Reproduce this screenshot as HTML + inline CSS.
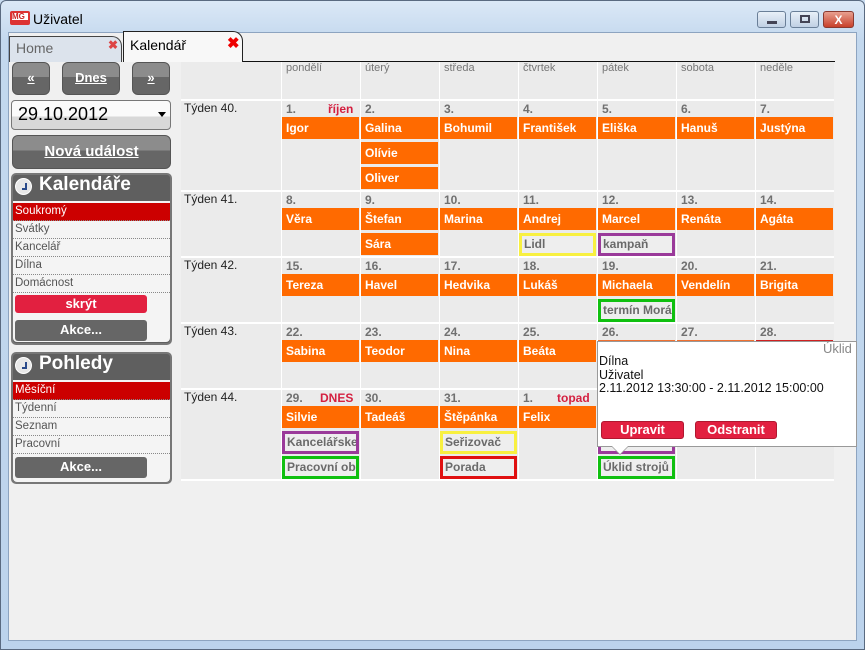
<!DOCTYPE html>
<html><head><meta charset="utf-8"><style>
*{margin:0;padding:0;box-sizing:border-box}
body{width:865px;height:650px;position:relative;overflow:hidden;background:#c9dcf0;font-family:"Liberation Sans",sans-serif;font-size:12px}
.a{position:absolute}
.win{left:0;top:0;width:865px;height:650px;border:1px solid #5a6a80;border-radius:6px 6px 0 0;background:linear-gradient(#dbe8f6,#c3d8ee 40px,#bcd3ec)}
.inner{left:8px;top:32px;width:849px;height:609px;background:#f0f0f0;border:1px solid #8da4c0}
.btn{background:linear-gradient(#8c8c8c 0,#8c8c8c 45%,#666 45%,#666);color:#fff;font-weight:bold;text-align:center;border-radius:6px;border:1px solid #555}
.cell{background:#ebebeb}
.dn{color:#707070;font-weight:bold;font-size:12px}
.ev{background:#ff6a00;color:#fff;font-weight:bold;font-size:12px;height:22px;line-height:22px;padding-left:4px;width:77px;white-space:nowrap;overflow:hidden}
.ob{background:#eee;color:#6a6a6a;font-weight:bold;font-size:12px;height:23px;line-height:17px;padding-left:2px;width:77px;border:3px solid;white-space:nowrap;overflow:hidden}
.hd{color:#777;font-size:11px}
.wk{font-size:12px;color:#222}
.it{left:13px;width:157px;height:18px;line-height:17px;font-size:11.5px;color:#555;border-bottom:1px dotted #888;padding-left:2px;background:#f4f4f4}
.panel{background:#5f5f5f;border-radius:5px;border:2px solid #777}
.clk{width:17px;height:17px;border-radius:50%;background:#e8e8e8;border:1px solid #fff}
.clk:after{content:"";position:absolute;left:6px;top:4px;width:3px;height:5px;border-right:2px solid #2a4a8a;border-bottom:2px solid #2a4a8a}
</style></head><body>
<div class="a win"></div>
<div class="a" style="left:10px;top:11px;width:20px;height:14px;background:#d33;border-radius:2px"></div>
<div class="a" style="left:12px;top:13px;width:16px;height:7px;background:#fff"></div>
<div class="a" style="left:12px;top:13px;font-size:8px;color:#c22;font-weight:bold;line-height:8px">MG</div>
<div class="a" style="left:33px;top:11px;font-size:14px;color:#000">Uživatel</div>
<div class="a" style="left:757px;top:11px;width:29px;height:17px;border:1px solid #6a7f98;border-radius:3px;background:linear-gradient(#e8f0f8,#c0d0e4)"><div class="a" style="left:9px;top:9px;width:10px;height:3px;background:#445"></div></div>
<div class="a" style="left:790px;top:11px;width:29px;height:17px;border:1px solid #6a7f98;border-radius:3px;background:linear-gradient(#e8f0f8,#c0d0e4)"><div class="a" style="left:9px;top:3px;width:10px;height:8px;border:2px solid #445"></div></div>
<div class="a" style="left:823px;top:11px;width:31px;height:17px;border:1px solid #8a3a30;border-radius:3px;background:linear-gradient(#e8a090,#c8402a);color:#fff;font-weight:bold;text-align:center;line-height:16px;font-size:12px">X</div>
<div class="a inner"></div>
<div class="a" style="left:9px;top:36px;width:113px;height:26px;background:#dce3ec;border:1px solid #444;border-bottom:none;border-radius:0 10px 0 0"></div>
<div class="a" style="left:16px;top:40px;font-size:14px;color:#666">Home</div>
<div class="a" style="left:108px;top:38px;font-size:12px;color:#d44;font-weight:bold">✖</div>
<div class="a" style="left:123px;top:31px;width:120px;height:31px;background:#f8f8f8;border:1px solid #222;border-bottom:none;border-radius:0 10px 0 0"></div>
<div class="a" style="left:130px;top:37px;font-size:14px;color:#000">Kalendář</div>
<div class="a" style="left:227px;top:34px;font-size:15px;color:#e00;font-weight:bold">✖</div>
<div class="a" style="left:243px;top:61px;width:592px;height:1px;background:#111"></div>

<!-- sidebar -->
<div class="a btn" style="left:12px;top:62px;width:38px;height:33px;line-height:30px;font-size:13px;text-decoration:underline">«</div>
<div class="a btn" style="left:62px;top:62px;width:58px;height:33px;line-height:30px;font-size:13px;text-decoration:underline">Dnes</div>
<div class="a btn" style="left:132px;top:62px;width:38px;height:33px;line-height:30px;font-size:13px;text-decoration:underline">»</div>
<div class="a" style="left:11px;top:100px;width:160px;height:30px;border:1px solid #777;border-radius:4px;background:linear-gradient(#fafafa,#fafafa 55%,#d8d8d8 55%,#d8d8d8);font-size:18px;line-height:26px;padding-left:6px">29.10.2012</div>
<div class="a" style="left:158px;top:112px;border:4px solid transparent;border-top:5px solid #000"></div>
<div class="a btn" style="left:12px;top:135px;width:159px;height:34px;line-height:31px;font-size:15px;text-decoration:underline">Nová událost</div>

<div class="a panel" style="left:11px;top:173px;width:161px;height:172px"></div>
<div class="a clk" style="left:15px;top:178px"></div>
<div class="a" style="left:39px;top:174px;font-size:19px;color:#fff;font-weight:bold">Kalendáře</div>
<div class="a" style="left:13px;top:201px;width:157px;height:141px;background:#f4f4f4;border-radius:0 0 4px 4px"></div>
<div class="a it" style="top:203px;background:#cc0000;color:#fff">Soukromý</div>
<div class="a it" style="top:221px">Svátky</div>
<div class="a it" style="top:239px">Kancelář</div>
<div class="a it" style="top:257px">Dílna</div>
<div class="a it" style="top:275px">Domácnost</div>
<div class="a" style="left:15px;top:295px;width:132px;height:18px;background:#e22040;border-radius:3px;color:#fff;font-weight:bold;text-align:center;line-height:17px;font-size:13px">skrýt</div>
<div class="a" style="left:15px;top:320px;width:132px;height:21px;background:#666;border-radius:3px;color:#fff;font-weight:bold;text-align:center;line-height:20px;font-size:13px">Akce...</div>

<div class="a panel" style="left:11px;top:352px;width:161px;height:132px"></div>
<div class="a clk" style="left:15px;top:357px"></div>
<div class="a" style="left:39px;top:353px;font-size:19px;color:#fff;font-weight:bold">Pohledy</div>
<div class="a" style="left:13px;top:380px;width:157px;height:102px;background:#f4f4f4;border-radius:0 0 4px 4px"></div>
<div class="a it" style="top:382px;background:#cc0000;color:#fff">Měsíční</div>
<div class="a it" style="top:400px">Týdenní</div>
<div class="a it" style="top:418px">Seznam</div>
<div class="a it" style="top:436px">Pracovní</div>
<div class="a" style="left:15px;top:457px;width:132px;height:21px;background:#666;border-radius:3px;color:#fff;font-weight:bold;text-align:center;line-height:20px;font-size:13px">Akce...</div>

<!-- grid background -->
<div class="a" style="left:181px;top:62px;width:653px;height:419px;background:#fff"></div>
<div class="a cell" style="left:181px;top:62px;width:100px;height:37px"></div>
<div class="a cell" style="left:181px;top:101px;width:100px;height:89px"></div>
<div class="a cell" style="left:181px;top:192px;width:100px;height:64px"></div>
<div class="a cell" style="left:181px;top:258px;width:100px;height:64px"></div>
<div class="a cell" style="left:181px;top:324px;width:100px;height:64px"></div>
<div class="a cell" style="left:181px;top:390px;width:100px;height:89px"></div>
<div class="a" style="left:282px;top:62px;width:552px;height:417px;background:repeating-linear-gradient(90deg,#ebebeb 0,#ebebeb 78px,#fff 78px,#fff 79px)"></div>
<div class="a" style="left:282px;top:99px;width:552px;height:2px;background:#fff"></div>
<div class="a" style="left:282px;top:190px;width:552px;height:2px;background:#fff"></div>
<div class="a" style="left:282px;top:256px;width:552px;height:2px;background:#fff"></div>
<div class="a" style="left:282px;top:322px;width:552px;height:2px;background:#fff"></div>
<div class="a" style="left:282px;top:388px;width:552px;height:2px;background:#fff"></div>

<div class="a hd" style="left:286px;top:62px">pondělí</div>
<div class="a hd" style="left:365px;top:62px">úterý</div>
<div class="a hd" style="left:444px;top:62px">středa</div>
<div class="a hd" style="left:523px;top:62px">čtvrtek</div>
<div class="a hd" style="left:602px;top:62px">pátek</div>
<div class="a hd" style="left:681px;top:62px">sobota</div>
<div class="a hd" style="left:760px;top:62px">neděle</div>

<div class="a wk" style="left:184px;top:101px">Týden 40.</div>
<div class="a wk" style="left:184px;top:192px">Týden 41.</div>
<div class="a wk" style="left:184px;top:258px">Týden 42.</div>
<div class="a wk" style="left:184px;top:324px">Týden 43.</div>
<div class="a wk" style="left:184px;top:390px">Týden 44.</div>

<!-- W40 -->
<div class="a dn" style="left:286px;top:102px">1.</div><div class="a dn" style="left:328px;top:102px;color:#d42040">říjen</div>
<div class="a dn" style="left:365px;top:102px">2.</div><div class="a dn" style="left:444px;top:102px">3.</div><div class="a dn" style="left:523px;top:102px">4.</div><div class="a dn" style="left:602px;top:102px">5.</div><div class="a dn" style="left:681px;top:102px">6.</div><div class="a dn" style="left:760px;top:102px">7.</div>
<div class="a ev" style="left:282px;top:117px">Igor</div><div class="a ev" style="left:361px;top:117px">Galina</div><div class="a ev" style="left:440px;top:117px">Bohumil</div><div class="a ev" style="left:519px;top:117px">František</div><div class="a ev" style="left:598px;top:117px">Eliška</div><div class="a ev" style="left:677px;top:117px">Hanuš</div><div class="a ev" style="left:756px;top:117px">Justýna</div>
<div class="a ev" style="left:361px;top:142px">Olívie</div><div class="a ev" style="left:361px;top:167px">Oliver</div>
<!-- W41 -->
<div class="a dn" style="left:286px;top:193px">8.</div><div class="a dn" style="left:365px;top:193px">9.</div><div class="a dn" style="left:444px;top:193px">10.</div><div class="a dn" style="left:523px;top:193px">11.</div><div class="a dn" style="left:602px;top:193px">12.</div><div class="a dn" style="left:681px;top:193px">13.</div><div class="a dn" style="left:760px;top:193px">14.</div>
<div class="a ev" style="left:282px;top:208px">Věra</div><div class="a ev" style="left:361px;top:208px">Štefan</div><div class="a ev" style="left:440px;top:208px">Marina</div><div class="a ev" style="left:519px;top:208px">Andrej</div><div class="a ev" style="left:598px;top:208px">Marcel</div><div class="a ev" style="left:677px;top:208px">Renáta</div><div class="a ev" style="left:756px;top:208px">Agáta</div>
<div class="a ev" style="left:361px;top:233px">Sára</div>
<div class="a ob" style="left:519px;top:233px;border-color:#f8f040">Lidl</div>
<div class="a ob" style="left:598px;top:233px;border-color:#9a3a9a">kampaň</div>
<!-- W42 -->
<div class="a dn" style="left:286px;top:259px">15.</div><div class="a dn" style="left:365px;top:259px">16.</div><div class="a dn" style="left:444px;top:259px">17.</div><div class="a dn" style="left:523px;top:259px">18.</div><div class="a dn" style="left:602px;top:259px">19.</div><div class="a dn" style="left:681px;top:259px">20.</div><div class="a dn" style="left:760px;top:259px">21.</div>
<div class="a ev" style="left:282px;top:274px">Tereza</div><div class="a ev" style="left:361px;top:274px">Havel</div><div class="a ev" style="left:440px;top:274px">Hedvika</div><div class="a ev" style="left:519px;top:274px">Lukáš</div><div class="a ev" style="left:598px;top:274px">Michaela</div><div class="a ev" style="left:677px;top:274px">Vendelín</div><div class="a ev" style="left:756px;top:274px">Brigita</div>
<div class="a ob" style="left:598px;top:299px;border-color:#10c010">termín Morá</div>
<!-- W43 -->
<div class="a dn" style="left:286px;top:325px">22.</div><div class="a dn" style="left:365px;top:325px">23.</div><div class="a dn" style="left:444px;top:325px">24.</div><div class="a dn" style="left:523px;top:325px">25.</div><div class="a dn" style="left:602px;top:325px">26.</div><div class="a dn" style="left:681px;top:325px">27.</div><div class="a dn" style="left:760px;top:325px">28.</div>
<div class="a ev" style="left:282px;top:340px">Sabina</div><div class="a ev" style="left:361px;top:340px">Teodor</div><div class="a ev" style="left:440px;top:340px">Nina</div><div class="a ev" style="left:519px;top:340px">Beáta</div>
<div class="a" style="left:598px;top:340px;width:77px;height:2px;background:#f07030"></div>
<div class="a" style="left:677px;top:340px;width:77px;height:2px;background:#f07030"></div>
<div class="a" style="left:756px;top:340px;width:77px;height:2px;background:#d02020"></div>
<!-- W44 -->
<div class="a dn" style="left:286px;top:391px">29.</div><div class="a dn" style="left:320px;top:391px;color:#d42040">DNES</div>
<div class="a dn" style="left:365px;top:391px">30.</div><div class="a dn" style="left:444px;top:391px">31.</div><div class="a dn" style="left:523px;top:391px">1.</div><div class="a dn" style="left:557px;top:391px;color:#d42040">topad</div>
<div class="a ev" style="left:282px;top:406px">Silvie</div><div class="a ev" style="left:361px;top:406px">Tadeáš</div><div class="a ev" style="left:440px;top:406px">Štěpánka</div><div class="a ev" style="left:519px;top:406px">Felix</div>
<div class="a ob" style="left:282px;top:431px;border-color:#9a3a9a">Kancelářske</div>
<div class="a ob" style="left:440px;top:431px;border-color:#f8f040">Seřizovač</div>
<div class="a ob" style="left:598px;top:431px;border-color:#9a3a9a"></div>
<div class="a ob" style="left:282px;top:456px;border-color:#10c010">Pracovní ob</div>
<div class="a ob" style="left:440px;top:456px;border-color:#e01010">Porada</div>
<div class="a ob" style="left:598px;top:456px;border-color:#10c010">Úklid strojů</div>

<!-- popup -->
<div class="a" style="left:597px;top:341px;width:260px;height:106px;background:#fff;border:1px solid #999"></div>
<div class="a" style="left:611px;top:446px;width:0;height:0;border-left:9px solid transparent;border-right:9px solid transparent;border-top:9px solid #999"></div>
<div class="a" style="left:612px;top:446px;width:0;height:0;border-left:8px solid transparent;border-right:8px solid transparent;border-top:8px solid #fff"></div>
<div class="a" style="left:823px;top:341px;font-size:13px;color:#888">Úklid</div>
<div class="a" style="left:599px;top:355px;font-size:12.5px;line-height:13.5px;color:#111">Dílna<br>Uživatel<br>2.11.2012 13:30:00 - 2.11.2012 15:00:00</div>
<div class="a" style="left:601px;top:421px;width:83px;height:18px;background:#e22040;border-radius:3px;border:1px solid #b01830;color:#fff;font-weight:bold;text-align:center;line-height:16px;font-size:13px">Upravit</div>
<div class="a" style="left:695px;top:421px;width:82px;height:18px;background:#e22040;border-radius:3px;border:1px solid #b01830;color:#fff;font-weight:bold;text-align:center;line-height:16px;font-size:13px">Odstranit</div>
</body></html>
